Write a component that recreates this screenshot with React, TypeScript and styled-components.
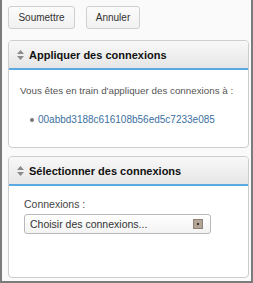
import * as React from 'react'
import styled, {createGlobalStyle} from 'styled-components'

const GlobalStyle = createGlobalStyle`
  html, body {
    margin: 0;
    padding: 0;
    background: #ffffff;
  }
  body {
    font-family: "Liberation Sans", Arial, sans-serif;
  }
`

const Frame = styled.div`
  box-sizing: border-box;
  width: 253px;
  height: 283px;
  background: #fafafa;
  border-left: 2px solid #7b7b7b;
  border-right: 2px solid #7b7b7b;
  border-bottom: 2px solid #7b7b7b;
  padding: 6px 2px 0 6px;
  display: flex;
  flex-direction: column;
  gap: 8px;
`

const Toolbar = styled.div`
  display: flex;
  gap: 11px;
  margin-bottom: 3px;
`

const Button = styled.button<{ $width: number }>`
  box-sizing: border-box;
  width: ${p => p.$width}px;
  height: 23px;
  padding: 0;
  border: 1px solid #cfcfcf;
  border-radius: 3px;
  background: linear-gradient(#fbfbfb, #f1f1f1);
  color: #333;
  font-family: "Liberation Sans", Arial, sans-serif;
  font-size: 10px;
`

const Panel = styled.div<{ $height: number }>`
  box-sizing: border-box;
  flex-shrink: 0;
  height: ${p => p.$height}px;
  border: 1px solid #cdcdcd;
  border-radius: 4px;
  background: #fff;
  overflow: hidden;
`

const PanelHeader = styled.div`
  box-sizing: border-box;
  height: 29px;
  display: flex;
  align-items: center;
  padding-left: 8px;
  background: linear-gradient(#f8f8f8, #e6e6e6);
  border-bottom: 2px solid #5aa9e0;
  color: #111;
  font-weight: bold;
  font-size: 11px;
`

const SortIcon = () => (
    <svg width="7" height="10" viewBox="0 0 7 10" style={{marginRight: 5}}>
        <path d="M3.5 0 L7 4 L0 4 Z" fill="#8a8a8a"/>
        <path d="M3.5 10 L7 6 L0 6 Z" fill="#8a8a8a"/>
    </svg>
)

const PanelBody = styled.div<{ $top: number }>`
  padding: ${p => p.$top}px 11px 0;
  color: #555;
  font-size: 10px;
`

const Intro = styled.p`
  margin: 0 0 18px;
  font-size: 9.8px;
  white-space: nowrap;
`

const HashList = styled.ul`
  margin: 0;
  padding-left: 10px;
  list-style: none;
`

const HashItem = styled.li`
  display: flex;
  align-items: center;
  gap: 4px;
  color: #3b6f9e;
  font-size: 10px;
  white-space: nowrap;
  &::before {
    content: '';
    flex-shrink: 0;
    width: 4px;
    height: 4px;
    border-radius: 50%;
    background: #777;
  }
`

const Label = styled.div`
  font-size: 10.5px;
  color: #444;
  margin: 0 0 4px 4px;
`

const Select = styled.div`
  box-sizing: border-box;
  width: 187px;
  height: 20px;
  margin-left: 4px;
  display: flex;
  align-items: center;
  justify-content: space-between;
  padding: 0 7px 0 5px;
  border: 1px solid #b8b8b8;
  border-radius: 3px;
  background: linear-gradient(#fff, #f3f3f3);
  font-size: 10.5px;
  color: #333;
`

const SelectArrow = styled.span`
  width: 10px;
  height: 10px;
  background: #b3a595;
  border: 1px solid #8d8275;
  box-sizing: border-box;
  display: flex;
  align-items: center;
  justify-content: center;
  &::after {
    content: '';
    width: 2px;
    height: 2px;
    background: #333;
  }
`

export default function App() {
    return (
        <>
            <GlobalStyle/>
            <Frame>
                <Toolbar>
                    <Button $width={67}>Soumettre</Button>
                    <Button $width={54}>Annuler</Button>
                </Toolbar>
                <Panel $height={108}>
                    <PanelHeader><SortIcon/>Appliquer des connexions</PanelHeader>
                    <PanelBody $top={15}>
                        <Intro>Vous êtes en train d'appliquer des connexions à :</Intro>
                        <HashList>
                            <HashItem>00abbd3188c616108b56ed5c7233e085</HashItem>
                        </HashList>
                    </PanelBody>
                </Panel>
                <Panel $height={122}>
                    <PanelHeader><SortIcon/>Sélectionner des connexions</PanelHeader>
                    <PanelBody $top={12}>
                        <Label>Connexions :</Label>
                        <Select>
                            Choisir des connexions...
                            <SelectArrow/>
                        </Select>
                    </PanelBody>
                </Panel>
            </Frame>
        </>
    )
}
